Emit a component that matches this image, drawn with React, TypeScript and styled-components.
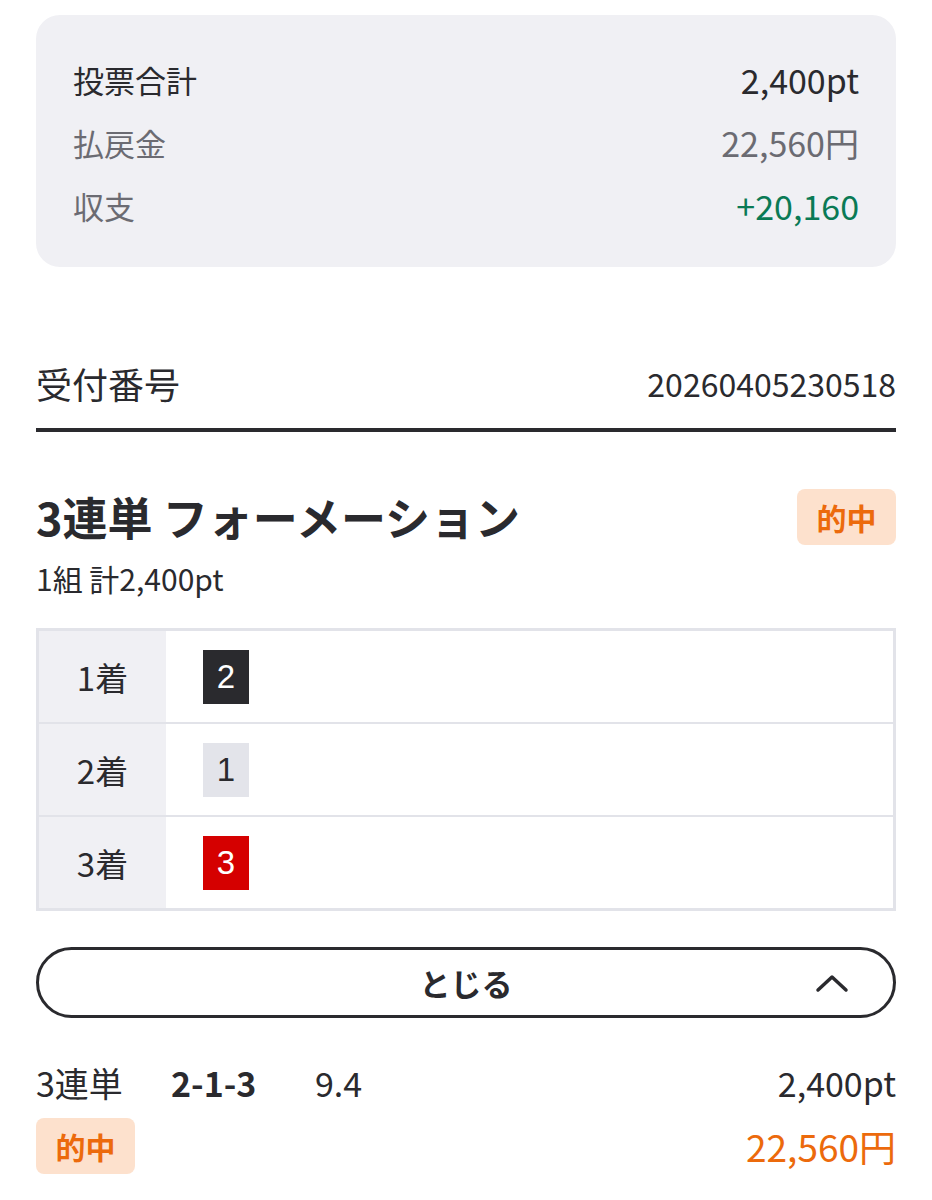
import styled, { createGlobalStyle } from "styled-components";

const Global = createGlobalStyle`
  body {
    margin: 0;
    background: #fff;
    font-family: "Noto Sans CJK JP", "Noto Sans", sans-serif;
    color: #2a2a2e;
  }
`;

const Page = styled.div`
  width: 932px;
  padding: 15px 36px 0;
  box-sizing: border-box;
`;

const Summary = styled.div`
  background: #f0f0f4;
  border-radius: 24px;
  padding: 33px 37px 30px;
  display: flex;
  flex-direction: column;
`;

const SumRow = styled.div<{ tone?: string }>`
  display: flex;
  justify-content: space-between;
  align-items: center;
  height: 63px;
  font-size: 31px;
  color: ${({ tone }) => tone || "#6b6b72"};
  &:first-child {
    color: #2a2a2e;
  }
`;

const Value = styled.span<{ color?: string }>`
  font-size: 34px;
  color: ${({ color }) => color || "inherit"};
`;

const Receipt = styled.div`
  margin-top: 90px;
  display: flex;
  justify-content: space-between;
  align-items: center;
  padding-bottom: 19px;
  border-bottom: 4px solid #2a2a2e;
`;

const ReceiptLabel = styled.span`
  font-size: 36px;
  line-height: 52px;
`;

const ReceiptNo = styled.span`
  font-size: 32px;
`;

const TitleRow = styled.div`
  margin-top: 57px;
  display: flex;
  justify-content: space-between;
  align-items: center;
`;

const Title = styled.h2`
  margin: 0;
  font-size: 45px;
  font-weight: 700;
  line-height: 56px;
`;

const Badge = styled.span`
  display: inline-flex;
  align-items: center;
  justify-content: center;
  background: #fde1cd;
  color: #ec6a0c;
  font-weight: 700;
  font-size: 30px;
  border-radius: 8px;
  width: 99px;
  height: 56px;
`;

const Sub = styled.div`
  font-size: 30px;
  line-height: 40px;
  margin-top: 13px;
`;

const Table = styled.div`
  margin-top: 30px;
  border: 3px solid #e2e3e9;
  display: flex;
  flex-direction: column;
`;

const TRow = styled.div`
  display: grid;
  grid-template-columns: 127px 1fr;
  height: 91px;
  & + & {
    border-top: 2px solid #e2e3e9;
  }
`;

const TLabel = styled.div`
  background: #f0f0f4;
  display: flex;
  align-items: center;
  justify-content: center;
  font-size: 33px;
`;

const TCell = styled.div`
  display: flex;
  align-items: center;
  padding-left: 37px;
`;

const Num = styled.span<{ bg: string; fg: string }>`
  width: 46px;
  height: 54px;
  background: ${({ bg }) => bg};
  color: ${({ fg }) => fg};
  display: flex;
  align-items: center;
  justify-content: center;
  font-size: 33px;
  font-family: "Liberation Sans", "Noto Sans", sans-serif;
`;

const CloseBtn = styled.button`
  margin-top: 36px;
  width: 100%;
  height: 71px;
  border: 3px solid #2a2a2e;
  border-radius: 36px;
  background: #fff;
  position: relative;
  display: flex;
  align-items: center;
  justify-content: center;
  font-family: inherit;
  font-size: 31px;
  font-weight: 700;
  color: #2a2a2e;
  svg {
    position: absolute;
    right: 44px;
    top: 50%;
    transform: translateY(-50%);
  }
`;

const Bet = styled.div`
  margin-top: 42px;
  display: flex;
  align-items: center;
  font-size: 34px;
  height: 44px;
`;

const BetType = styled.span`
  width: 135px;
`;

const Combo = styled.span`
  font-weight: 700;
  width: 144px;
`;

const Odds = styled.span`
  flex: 1;
`;

const Result = styled.div`
  margin-top: 14px;
  display: flex;
  justify-content: space-between;
  align-items: center;
  font-size: 37px;
  color: #ec6a0c;
`;

const rows = [
  { label: "1着", n: 2, bg: "#2a2a2e", fg: "#fff" },
  { label: "2着", n: 1, bg: "#e3e4ea", fg: "#2a2a2e" },
  { label: "3着", n: 3, bg: "#d50000", fg: "#fff" },
];

export default function App() {
  return (
    <Page>
      <Global />
      <Summary>
        <SumRow>
          <span>投票合計</span>
          <Value>2,400pt</Value>
        </SumRow>
        <SumRow>
          <span>払戻金</span>
          <Value>22,560円</Value>
        </SumRow>
        <SumRow>
          <span>収支</span>
          <Value color="#0a7a55">+20,160</Value>
        </SumRow>
      </Summary>

      <Receipt>
        <ReceiptLabel>受付番号</ReceiptLabel>
        <ReceiptNo>20260405230518</ReceiptNo>
      </Receipt>

      <TitleRow>
        <Title>3連単 フォーメーション</Title>
        <Badge>的中</Badge>
      </TitleRow>
      <Sub>1組 計2,400pt</Sub>

      <Table>
        {rows.map((r) => (
          <TRow key={r.label}>
            <TLabel>{r.label}</TLabel>
            <TCell>
              <Num bg={r.bg} fg={r.fg}>{r.n}</Num>
            </TCell>
          </TRow>
        ))}
      </Table>

      <CloseBtn>
        とじる
        <svg width="34" height="20" viewBox="0 0 34 20" fill="none">
          <path d="M3 17 L17 4 L31 17" stroke="#2a2a2e" strokeWidth="3.5" strokeLinecap="round" strokeLinejoin="round" />
        </svg>
      </CloseBtn>

      <Bet>
        <BetType>3連単</BetType>
        <Combo>2-1-3</Combo>
        <Odds>9.4</Odds>
        <span>2,400pt</span>
      </Bet>
      <Result>
        <Badge>的中</Badge>
        <span>22,560円</span>
      </Result>
    </Page>
  );
}
